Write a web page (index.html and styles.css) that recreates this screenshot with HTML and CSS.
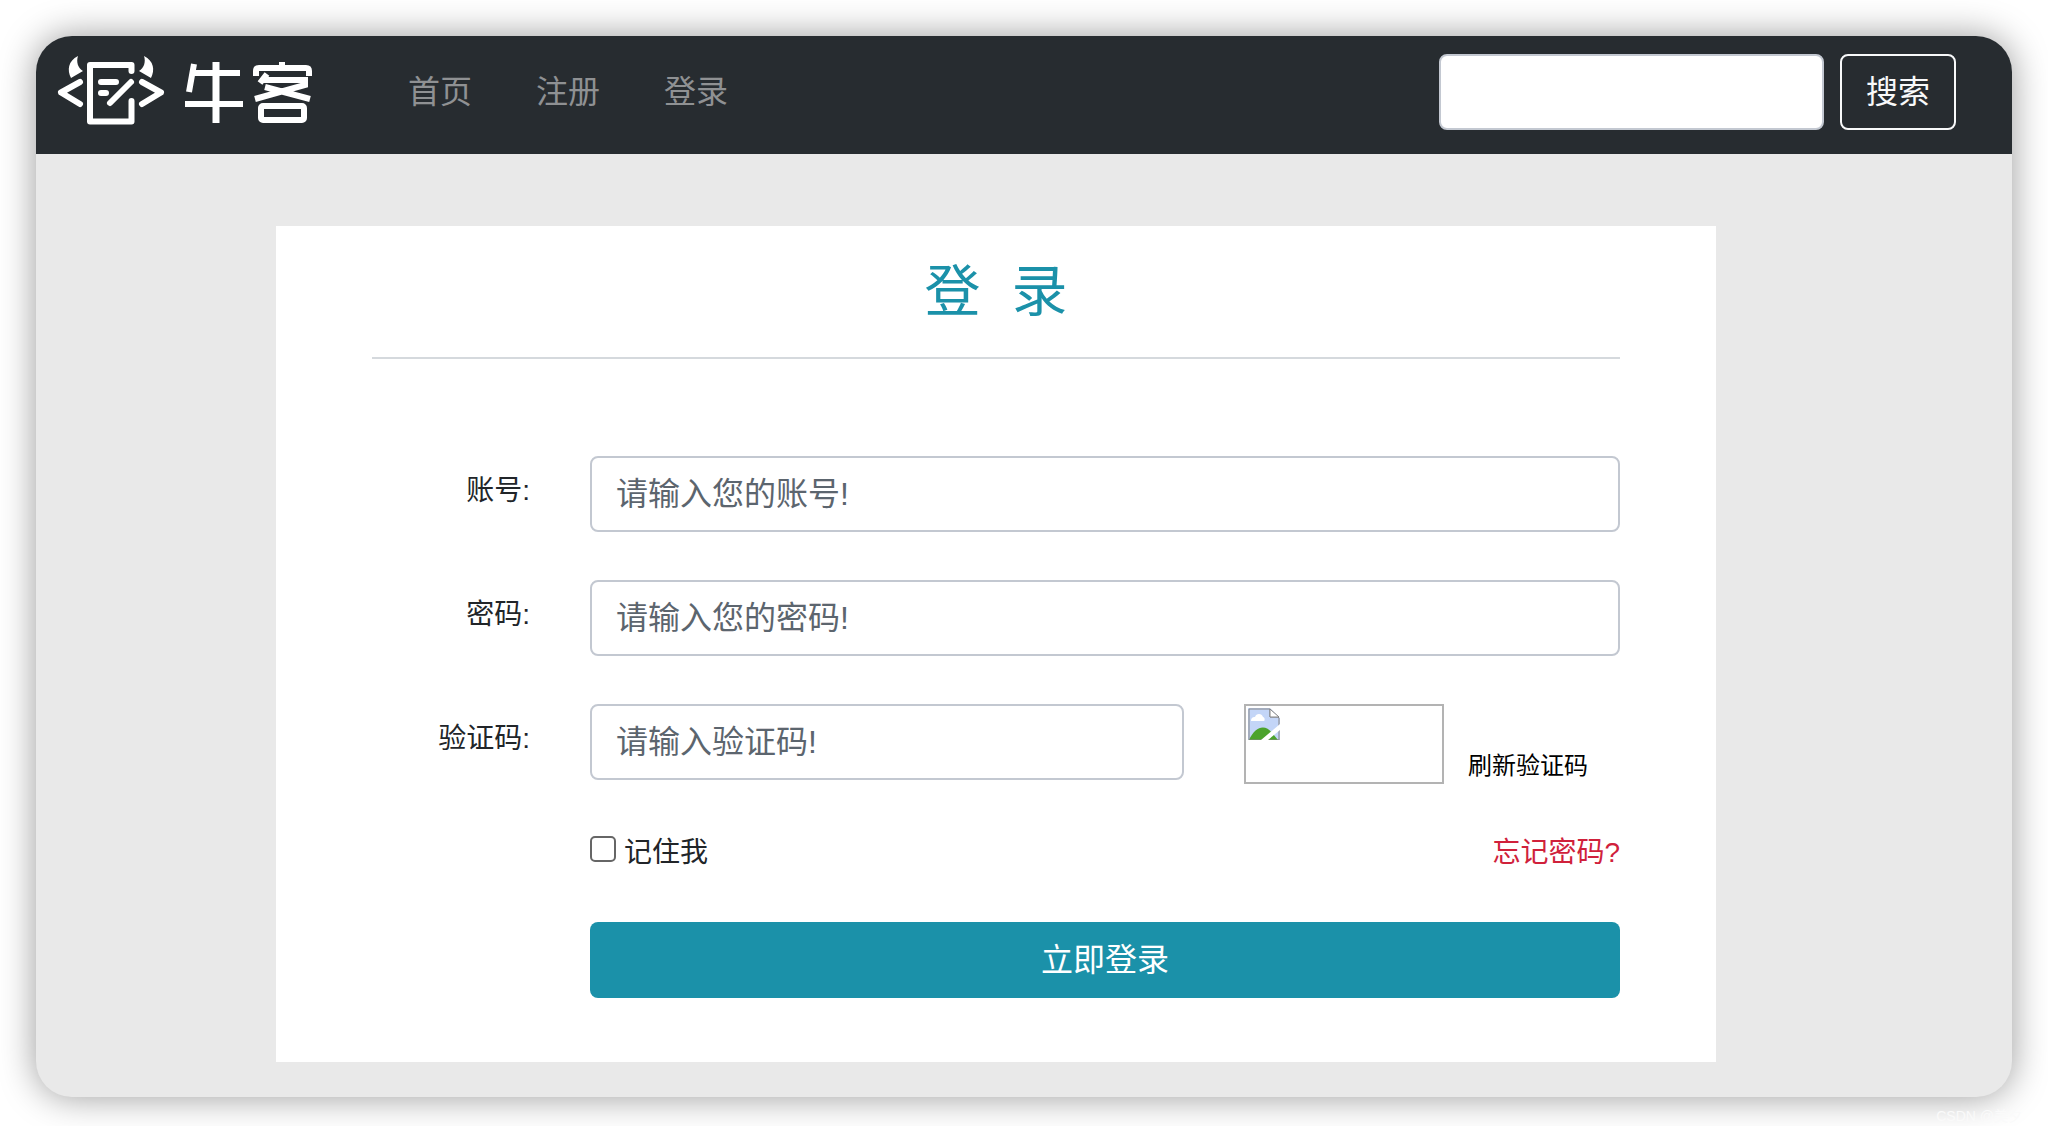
FILE: index.html
```
<!DOCTYPE html>
<html lang="zh-CN">
<head>
<meta charset="utf-8">
<meta name="viewport" content="width=device-width, initial-scale=1">
<title>牛客 - 登录</title>
<link rel="stylesheet" href="styles.css">
</head>
<body>
<div class="window">
  <header class="navbar">
    <a class="brand" href="#" aria-label="牛客">
      <svg class="brand-logo" viewBox="0 0 260 76" fill="none" stroke="#fff" stroke-width="6" stroke-linecap="round" stroke-linejoin="round" aria-hidden="true">
        <path d="M24 28 5 38.500l19 11.500M86 28l19 10.500-19 11.500"/>
        <path d="M75.500 17V11H34v56.500h41.500V47M45 28h15M45 39h5"/>
        <path d="M75 28 54 49"/>
        <path d="M22 2C12 7 11 16 15 24l12-7c-5-3-7-9-5-15zM88 2c10 5 11 14 7 22l-12-7c5-3 7-9 5-15z" fill="#fff" stroke="none"/>
        <g stroke-linecap="butt" stroke-linejoin="miter">
          <path d="M138 10l-5 28M136 19h48M129 50h58"/>
          <path d="M160 8v61" stroke-width="7"/>
          <path d="M200 22v-5q0-3 3-3h47q3 0 3 3v5M226 14V8M211 20l-7 9M206 26h43v5l-50 14M209 33l45 12"/>
          <rect x="205" y="52" width="43" height="14" rx="2"/>
        </g>
      </svg>
    </a>
    <nav class="nav">
      <a href="#">首页</a>
      <a href="#">注册</a>
      <a href="#">登录</a>
    </nav>
    <form class="search">
      <input class="control search-input" type="search" aria-label="搜索">
      <button class="btn btn-outline" type="button">搜索</button>
    </form>
  </header>
  <main class="main">
    <form class="card">
      <h1 class="title">登&nbsp;&nbsp;录</h1>
      <div class="row">
        <label class="label" for="username">账号:</label>
        <input class="control" id="username" type="text" placeholder="请输入您的账号!">
      </div>
      <div class="row">
        <label class="label" for="password">密码:</label>
        <input class="control" id="password" type="password" placeholder="请输入您的密码!">
      </div>
      <div class="row">
        <label class="label" for="code">验证码:</label>
        <div class="captcha">
          <input class="control" id="code" type="text" placeholder="请输入验证码!">
          <div class="captcha-side">
            <div class="captcha-image">
              <svg class="broken" viewBox="0 0 32 32" aria-hidden="true">
                <path d="M0 0h22l10 10v22H0z" fill="#c3d5f7"/>
                <path d="M3 13c0-4 3-4 4-4 1-4 7-4 8 0 2 0 2 4 1 4z" fill="#fff"/>
                <path d="M1 32C8 17 18 16 25 26l5 6z" fill="#4ca32c"/>
                <path d="M22 1v8h9M1 32V1h21l9 9v22z" fill="none" stroke="#858585"/>
                <path d="M22 1v8h9z" fill="#fff" stroke="#858585"/>
                <path d="M32 16v6L20 32h-7z" fill="#fff"/>
              </svg>
            </div>
            <a class="refresh" href="#">刷新验证码</a>
          </div>
        </div>
      </div>
      <div class="options">
        <label class="remember"><input class="check" type="checkbox">记住我</label>
        <a class="forgot" href="#">忘记密码?</a>
      </div>
      <button class="btn btn-primary" type="button">立即登录</button>
    </form>
  </main>
</div>
<footer class="credit">CSDN @美夕</footer>
</body>
</html>
```
FILE: styles.css
```
* { box-sizing: border-box; }
body {
  margin: 0;
  padding: 36px 36px 0;
  background: #fff;
  color: #212529;
  font-family: "Liberation Sans", "Noto Sans CJK SC", sans-serif;
  font-size: 28px;
  line-height: 42px;
}
a { color: inherit; text-decoration: none; }
.window {
  min-height: calc(100vh - 72px);
  border-radius: 36px;
  background: #e9e9e9;
  box-shadow: 0 0 36px rgba(0, 0, 0, .4);
  overflow: hidden;
}
.navbar {
  display: flex;
  align-items: flex-start;
  padding: 18px 56px 24px 20px;
  background: #272c30;
}
.brand { width: 260px; height: 76px; }
.brand-logo { display: block; width: 260px; height: 76px; }
.nav {
  display: flex;
  gap: 64px;
  margin-left: 92px;
  color: #8f9193;
  font-size: 32px;
  line-height: 76px;
}
.search { display: flex; gap: 16px; margin-left: auto; }
.search .search-input { width: 385px; }
.control {
  width: 100%;
  height: 76px;
  padding: 0 24px;
  border: 2px solid #c3c8d1;
  border-radius: 8px;
  background: #fff;
  color: #4a5057;
  font: inherit;
  font-size: 32px;
}
.control::placeholder { color: #5c656e; opacity: 1; }
.btn {
  height: 76px;
  border-radius: 8px;
  font: inherit;
  font-size: 32px;
}
.btn-outline { padding: 0 24px; border: 2px solid #f8f9fa; background: none; color: #f8f9fa; }
.main { padding: 72px 296px 35px 240px; }
.card { padding: 24px 96px 64px; background: #fff; }
.title {
  margin: 0 0 96px;
  padding-bottom: 23px;
  border-bottom: 2px solid #d5d9dd;
  color: #1b91a9;
  font-size: 56px;
  font-weight: 400;
  line-height: 84px;
  text-align: center;
}
.row {
  display: grid;
  grid-template-columns: 158px 1fr;
  gap: 60px;
  margin-bottom: 48px;
}
.title + .row { margin-top: 97px; }
.label { padding-top: 14px; text-align: right; }
.captcha { display: grid; grid-template-columns: 1fr 376px; gap: 60px; height: 80px; }
.captcha-side { display: flex; align-items: flex-end; gap: 24px; }
.captcha-image { width: 200px; height: 80px; padding: 2px; border: 2px solid #b3b3b3; }
.broken { display: block; width: 32px; height: 32px; }
.refresh { color: #000; font-size: 24px; line-height: 36px; }
.options {
  display: flex;
  justify-content: space-between;
  margin: 0 0 48px 218px;
}
.remember { display: flex; align-items: center; gap: 8px; }
.check {
  width: 26px;
  height: 26px;
  margin: 0 0 8px;
  border: 2px solid #666;
  border-radius: 5px;
  background: #fff;
  appearance: none;
}
.forgot { color: #d0213b; }
.btn-primary { display: block; width: calc(100% - 218px); margin-left: 218px; border: 0; background: #1b91a9; color: #fff; }
.credit {
  padding-top: 9px;
  margin-right: -10px;
  color: #fafafa;
  font-size: 14px;
  line-height: 20px;
  text-align: right;
  white-space: nowrap;
}
```
